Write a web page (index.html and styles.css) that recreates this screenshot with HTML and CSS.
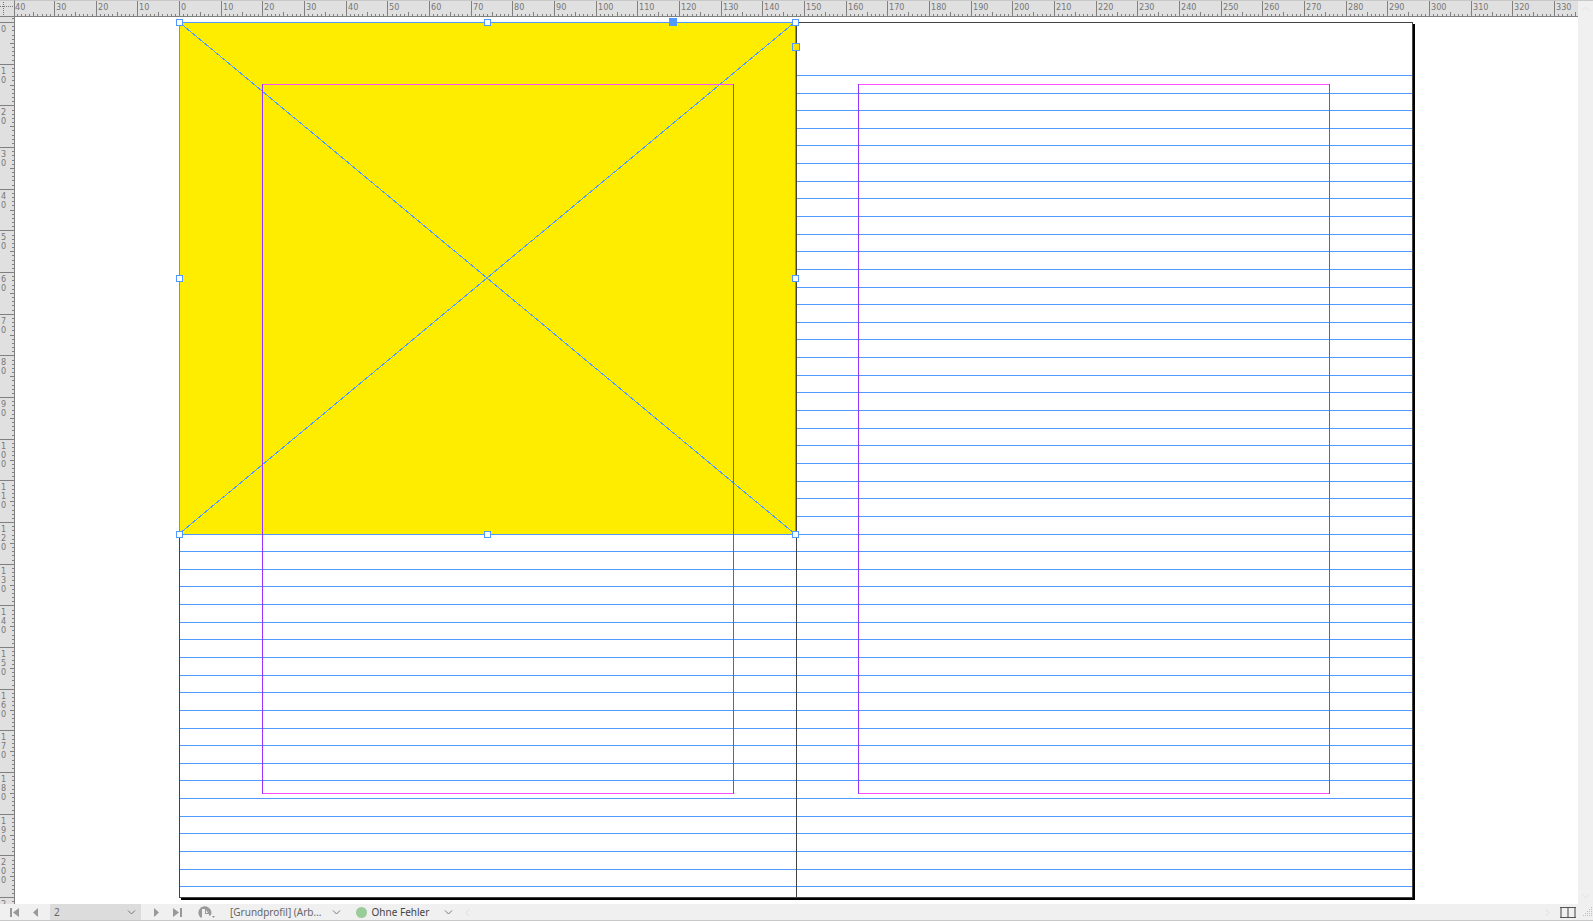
FILE: index.html
```html
<!DOCTYPE html>
<html lang="de">
<head>
    <meta charset="UTF-8">
    <meta name="viewport" content="width=device-width, initial-scale=1.0">
    <title>Layout</title>
    <link rel="stylesheet" href="styles.css">
</head>
<body>
    <div class="corner">
        <svg width="14" height="16">
            <path class="dots" d="M3.5 1V16M0 5.5H14"/>
        </svg>
    </div>
    <svg class="ruler ruler-top" id="ruler-top"></svg>
    <svg class="ruler ruler-left" id="ruler-left"></svg>
    <main class="pasteboard">
        <svg class="spread" id="spread"></svg>
    </main>
    <div class="scrollbar">
        <svg width="9" height="5"><path d="M1 4.5L4.5 1L8 4.5"/></svg>
        <svg width="9" height="5"><path d="M1 .5L4.5 4L8 .5"/></svg>
    </div>
    <footer class="statusbar">
        <button class="nav-btn first" aria-label="Erste Seite">
            <svg width="9" height="9"><path d="M0 0H2V9H0ZM9 0V9L3 4.5Z"/></svg>
        </button>
        <button class="nav-btn prev" aria-label="Vorherige Seite">
            <svg width="9" height="9"><path d="M6 0V9L1 4.5Z"/></svg>
        </button>
        <label class="page-select">
            <select aria-label="Seite">
                <option>2</option>
            </select>
            <svg class="chevron" width="9" height="5"><path d="M1 .5L4.5 4L8 .5"/></svg>
        </label>
        <button class="nav-btn next" aria-label="Nächste Seite">
            <svg width="9" height="9"><path d="M2 0V9L7 4.5Z"/></svg>
        </button>
        <button class="nav-btn last" aria-label="Letzte Seite">
            <svg width="9" height="9"><path d="M0 0V9L6 4.5ZM7 0H9V9H7Z"/></svg>
        </button>
        <button class="nav-btn preflight" aria-label="Preflight">
            <svg width="18" height="13">
                <path d="M3 12A6.5 6.5 0 1 1 13 9L11 10V12H5V10Z"/>
                <path class="sheet" d="M4 3H8L11 6V13H4Z"/>
                <path d="M7 3H8.5L11 6V8H7Z"/>
                <path class="sheet" d="M8 4L10 7H8Z"/>
                <path d="M14 10H17L15.5 12Z"/>
            </svg>
        </button>
        <button class="menu-btn profile">
            <span>[Grundprofil] (Arb...</span>
            <svg class="chevron" width="9" height="5"><path d="M1 .5L4.5 4L8 .5"/></svg>
        </button>
        <button class="menu-btn errors">
            <i class="dot"></i>
            <span>Ohne Fehler</span>
            <svg class="chevron" width="9" height="5"><path d="M1 .5L4.5 4L8 .5"/></svg>
        </button>
        <svg class="faint" width="5" height="9"><path d="M4 1L1 4.5L4 8"/></svg>
        <svg class="faint right" width="5" height="9"><path d="M1 1L4 4.5L1 8"/></svg>
        <button class="split-btn" aria-label="Layoutansicht teilen">
            <svg width="16" height="11">
                <path class="side" d="M0 0H2V11H0ZM7 0H9V11H7ZM14 0H16V11H14Z"/>
                <path class="edge" d="M0 0H16V1H0ZM0 10H16V11H0Z"/>
            </svg>
        </button>
        <svg class="grip" width="10" height="10">
            <path d="M8 0h1v1h-1zM6 2h1v1h-1zM8 2h1v1h-1zM4 4h1v1h-1zM6 4h1v1h-1zM8 4h1v1h-1zM2 6h1v1h-1zM4 6h1v1h-1zM6 6h1v1h-1zM8 6h1v1h-1zM0 8h1v1h-1zM2 8h1v1h-1zM4 8h1v1h-1zM6 8h1v1h-1zM8 8h1v1h-1z"/>
        </svg>
    </footer>
    <script src="script.js"></script>
</body>
</html>
```
FILE: styles.css
```css
* {
    box-sizing: border-box;
}
body {
    margin: 0;
    height: 100vh;
    display: grid;
    grid-template-columns: 15px 1fr 15px;
    grid-template-rows: 17px 1fr 17px;
    background-color: #fff;
    font-family: "Noto Sans", sans-serif;
    overflow: hidden;
}
svg {
    display: block;
}
button {
    border: none;
    padding: 0;
    background: none;
    font: inherit;
    color: inherit;
    cursor: pointer;
}

/* Rulers */
.corner,
.ruler {
    background-color: #e0e0e0;
    border-top: 1px solid #c8c8c8;
}
.corner {
    border-right: 1px solid #808080;
    border-bottom: 1px solid #808080;
}
.dots {
    fill: none;
    stroke: #777;
    stroke-dasharray: 1 1;
}
.ruler {
    width: 100%;
    height: 100%;
    overflow: hidden;
}
.ruler-top {
    border-bottom: 1px solid #808080;
}
.ruler-left {
    border-top: none;
    border-right: 1px solid #808080;
}
.ruler rect {
    fill: #808080;
}
.ruler text {
    fill: #777;
    font-family: "DejaVu Sans Condensed", "DejaVu Sans", sans-serif;
    font-size: 9px;
}

/* Document */
.pasteboard {
    min-width: 0;
    min-height: 0;
}
.spread {
    width: 100%;
    height: 100%;
    shape-rendering: crispEdges;
}
.shadow {
    fill: #000;
}
.page {
    fill: #fff;
    stroke: #444;
}
.spine {
    fill: #444;
}
.baseline {
    fill: #4f99ff;
}
.frame {
    fill: #ffed00;
    stroke: #4f99ff;
}
.diagonal {
    stroke: #4f99ff;
}
.margin-h {
    fill: #ff4fff;
}
.margin-v {
    fill: #9933ff;
}
.handle {
    fill: #fff;
    stroke: #4f99ff;
}
.handle.solid {
    fill: #4f99ff;
}
.handle.corner-edit {
    fill: #ffe000;
}

/* Scrollbar */
.scrollbar {
    grid-column: 3;
    grid-row: 1 / 3;
    display: flex;
    flex-direction: column;
    justify-content: space-between;
    align-items: center;
    padding: 5px 0;
    background-color: #f0f0f0;
    border-top: 1px solid #c8c8c8;
}
.scrollbar path,
.faint path {
    fill: none;
    stroke: #e0e0e0;
}

/* Status bar */
.statusbar {
    grid-column: 1 / 4;
    display: flex;
    align-items: center;
    background-color: #f0f0f0;
    border-bottom: 1px solid #c8c8c8;
    color: #555;
    font-size: 10px;
    line-height: 16px;
}
.nav-btn path {
    fill: #999;
}
.first {
    margin-left: 10px;
}
.prev {
    margin-left: 13px;
}
.page-select {
    display: flex;
    align-items: center;
    width: 91px;
    height: 16px;
    margin-left: 9px;
    padding-right: 5px;
    background-color: #dcdcdc;
}
.page-select select {
    flex: 1;
    height: 16px;
    padding: 0 4px;
    border: none;
    background: none;
    appearance: none;
    color: #666;
    font: inherit;
}
.chevron path {
    fill: none;
    stroke: #777;
}
.next {
    margin-left: 11px;
}
.last {
    margin-left: 12px;
}
.preflight {
    margin-left: 16px;
}
.preflight .sheet {
    fill: #f0f0f0;
}
.menu-btn {
    display: flex;
    align-items: center;
}
.profile {
    gap: 10px;
    margin-left: 14px;
    color: #666;
}
.errors {
    margin-left: 15px;
    color: #444;
}
.errors .chevron {
    margin-left: 15px;
}
.dot {
    width: 11px;
    height: 11px;
    margin-right: 5px;
    border-radius: 50%;
    background-color: #99cc99;
}
.faint {
    margin-left: 12px;
}
.faint.right {
    margin-left: auto;
}
.split-btn {
    margin-left: 10px;
}
.side {
    fill: #999;
}
.edge {
    fill: #555;
}
.grip {
    margin-left: 7px;
}
.grip path {
    fill: #c0c0c0;
}
```
FILE: script.js
```js
const NS = 'http://www.w3.org/2000/svg';
const SCALE = 25 / 6; // pixels per millimetre
const ORIGIN_X = 164; // page origin inside the pasteboard
const ORIGIN_Y = 5;

const px = mm => Math.round(ORIGIN_X + mm * SCALE);
const py = mm => Math.round(ORIGIN_Y + mm * SCALE);

function add(parent, name, attrs, text) {
    const el = document.createElementNS(NS, name);
    for (const key in attrs) {
        el.setAttribute(key, attrs[key]);
    }
    if (text !== undefined) {
        el.textContent = text;
    }
    parent.appendChild(el);
    return el;
}

function rect(parent, cls, x, y, width, height) {
    add(parent, 'rect', { class: cls, x, y, width, height });
}

function tickSize(mm, full) {
    if (mm % 10 === 0) return full;
    return mm % 5 === 0 ? 4 : 2;
}

function drawTopRuler() {
    const ruler = document.getElementById('ruler-top');
    const last = Math.floor((ruler.clientWidth - ORIGIN_X) / SCALE);
    for (let mm = -40; mm <= last; mm++) {
        const size = tickSize(mm, 15);
        rect(ruler, 'tick', px(mm), 15 - size, 1, size);
        if (mm % 10 === 0) {
            add(ruler, 'text', { x: Math.max(px(mm) + 2, 0), y: 9 }, Math.abs(mm));
        }
    }
}

function drawLeftRuler() {
    const ruler = document.getElementById('ruler-left');
    const height = ruler.clientHeight;
    const last = Math.floor((height - ORIGIN_Y) / SCALE);
    for (let mm = -1; mm <= last; mm++) {
        const size = tickSize(mm, 14);
        rect(ruler, 'tick', 14 - size, py(mm), size, 1);
        if (mm % 10 === 0) {
            // one label per tick, digits stacked from top to bottom
            const label = add(ruler, 'text', { y: py(mm) + 10 });
            String(mm).split('').forEach((digit, i) => {
                if (py(mm) + i * 9 < height) {
                    add(label, 'tspan', { x: 1, dy: i ? 9 : 0 }, digit);
                }
            });
        }
    }
}

function drawMargins(svg, left, right) {
    const x1 = px(left), x2 = px(right), y1 = py(14.9), y2 = py(185);
    rect(svg, 'margin-h', x1, y1, x2 - x1, 1);
    rect(svg, 'margin-h', x1, y2, x2 - x1, 1);
    rect(svg, 'margin-v', x1, y1, 1, y2 - y1 + 1);
    rect(svg, 'margin-v', x2, y1, 1, y2 - y1 + 1);
}

function drawSpread() {
    const svg = document.getElementById('spread');
    const left = px(0), spine = px(148), right = px(296);
    const top = py(0), bottom = py(210);
    const frameRight = spine - 1;
    const frameBottom = py(122.8);

    rect(svg, 'shadow', left + 2, top + 2, right - left + 1, bottom - top + 1);
    rect(svg, 'page', left + 0.5, top + 0.5, right - left, bottom - top);

    // 12 pt baseline grid
    for (let mm = 12.7; mm < 210; mm += 4.2333) {
        rect(svg, 'baseline', left + 1, py(mm), right - left - 1, 1);
    }
    rect(svg, 'frame', left + 0.5, top + 0.5, frameRight - left, frameBottom - top);
    rect(svg, 'spine', spine, top, 1, bottom - top);
    add(svg, 'line', { class: 'diagonal', x1: left, y1: top, x2: frameRight, y2: frameBottom });
    add(svg, 'line', { class: 'diagonal', x1: left, y1: frameBottom, x2: frameRight, y2: top });

    drawMargins(svg, 20, 133);
    drawMargins(svg, 163, 276);

    const midX = Math.round((left + frameRight) / 2);
    const midY = Math.round((top + frameBottom) / 2);
    for (const x of [left, midX, frameRight]) {
        for (const y of [top, midY, frameBottom]) {
            if (x !== midX || y !== midY) {
                rect(svg, 'handle', x - 2.5, y - 2.5, 6, 6);
            }
        }
    }
    rect(svg, 'handle solid', 654.5, top - 3.5, 7, 7);
    rect(svg, 'handle corner-edit', frameRight - 2.5, top + 21.5, 7, 7);
}

drawTopRuler();
drawLeftRuler();
drawSpread();
```
